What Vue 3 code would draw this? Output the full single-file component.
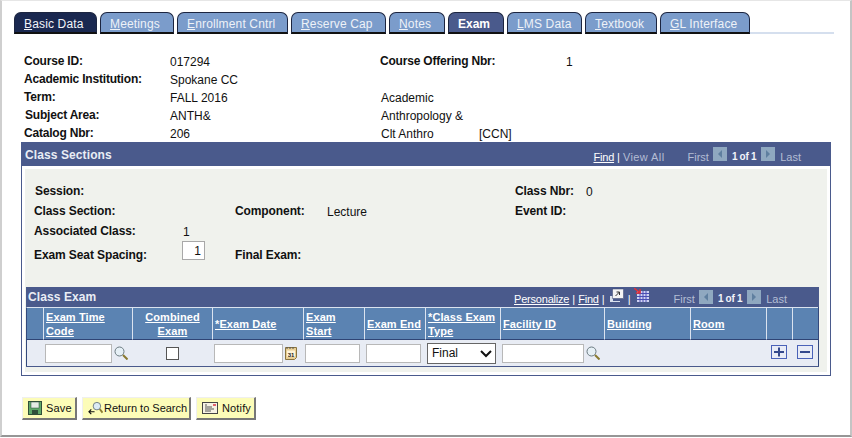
<template>
  <div class="page">
    <div class="tabs">
      <div
        v-for="tab in tabs"
        :key="tab.label"
        class="tab"
        :class="{ first: tab.first, current: tab.current }"
        :style="{ width: tab.width + 'px' }"
      >
        <u v-if="!tab.current">{{ tab.label[0] }}</u>{{ tab.current ? tab.label : tab.label.slice(1) }}
      </div>
      <div class="tab-rest"></div>
    </div>

    <div class="info">
      <b>Course ID:</b><span>017294</span><b class="span2">Course Offering Nbr:</b><span>1</span>
      <b>Academic Institution:</b><span class="span4">Spokane CC</span>
      <b>Term:</b><span>FALL 2016</span><span class="span3 indent">Academic</span>
      <b class="indent">Subject Area:</b><span>ANTH&amp;</span><span class="span3 indent">Anthropology &amp;</span>
      <b>Catalog Nbr:</b><span>206</span><span class="indent">Clt Anthro</span><span class="span2">[CCN]</span>
    </div>

    <section class="section">
      <header class="section-head">
        <span class="section-title">Class Sections</span>
        <nav class="pager">
          <u class="link">Find</u><i class="sep">|</i><span class="dim view-all">View All</span>
          <span class="dim first-label">First</span>
          <svg class="nav-btn" viewBox="0 0 14 14"><rect width="14" height="14" fill="#8fa8c0" /><path d="M9 3v8L5 7z" fill="#5f7f9f" /></svg>
          <b class="count">1 of 1</b>
          <svg class="nav-btn" viewBox="0 0 14 14"><rect width="14" height="14" fill="#8fa8c0" /><path d="M5 3v8l4-4z" fill="#5f7f9f" /></svg>
          <span class="dim">Last</span>
        </nav>
      </header>

      <div class="panel">
        <div class="fields">
          <b class="indent">Session:</b><span></span><span></span><span></span><b>Class Nbr:</b><span>0</span>
          <b>Class Section:</b><span></span><b>Component:</b><span>Lecture</span><b>Event ID:</b><span></span>
          <b>Associated Class:</b><span class="nudge">1</span><span></span><span></span><span></span><span></span>
          <b class="low">Exam Seat Spacing:</b><input class="seat" value="1" /><b class="low">Final Exam:</b>
        </div>

        <div class="grid">
          <header class="grid-head">
            <span class="section-title">Class Exam</span>
            <nav class="pager small">
              <u class="link">Personalize</u><i class="sep">|</i><u class="link">Find</u><i class="sep">|</i>
              <svg class="tool" viewBox="0 0 15 15">
                <path d="M1 8h3v5h7v1H1z" fill="#d8e0ec" />
                <rect x="3.500" y="1" width="11" height="9.500" fill="#f4f4f4" stroke="#39456e" stroke-width=".5" />
                <path d="M6.500 8l4-4M7.500 4h3v3" fill="none" stroke="#333" />
              </svg>
              <i class="sep">|</i>
              <svg class="tool" viewBox="0 0 15 15">
                <path d="M3 3h12v11H3z" fill="#cfd2f2" />
                <path d="M3 5.500h12M3 8.500h12M3 11.500h12M6 3v11M9 3v11M12 3v11" stroke="#4a4fb5" />
                <path d="M0 0l6 5M6 1v4H2" fill="none" stroke="#e0303a" stroke-width="1.500" />
              </svg>
              <span class="dim first-label">First</span>
              <svg class="nav-btn" viewBox="0 0 14 14"><rect width="14" height="14" fill="#8fa8c0" /><path d="M9 3v8L5 7z" fill="#5f7f9f" /></svg>
              <b class="count">1 of 1</b>
              <svg class="nav-btn" viewBox="0 0 14 14"><rect width="14" height="14" fill="#8fa8c0" /><path d="M5 3v8l4-4z" fill="#5f7f9f" /></svg>
              <span class="dim">Last</span>
            </nav>
          </header>

          <div class="table">
            <div class="th"></div>
            <div v-for="col in columns" :key="col.label" class="th" :class="{ centered: col.center }">
              <u>{{ col.label }}</u>
            </div>
            <div class="th"></div>
            <div class="th"></div>

            <div class="td"></div>
            <div class="td">
              <input class="text w67" />
              <svg class="lookup" viewBox="0 0 14 14">
                <circle cx="5.500" cy="5.500" r="4.500" fill="#e6f0f6" stroke="#6b7a80" />
                <path d="M9 9l4.500 4.500" stroke="#8a7a30" stroke-width="2" />
              </svg>
            </div>
            <div class="td center"><span class="check"></span></div>
            <div class="td">
              <input class="text w69" />
              <svg class="cal" viewBox="0 0 12 14">
                <path d="M.5 1.500h11v10l-2 2h-9z" fill="#e8cf94" stroke="#8a7440" />
                <path d="M2 1v2M5 1v2M8 1v2" stroke="#555" />
                <rect x="2" y="4.500" width="8" height="6.500" fill="#fff4d8" />
                <text x="6" y="10.500" text-anchor="middle" class="cal-day">31</text>
              </svg>
            </div>
            <div class="td"><input class="text w55" /></div>
            <div class="td"><input class="text w55" /></div>
            <div class="td">
              <div class="select-wrap">
                <select class="select"><option>Final</option></select>
                <svg class="chevron" viewBox="0 0 12 8"><path d="M1 1l5 5 5-5" fill="none" stroke="#111" stroke-width="2" /></svg>
              </div>
            </div>
            <div class="td">
              <input class="text w82" />
              <svg class="lookup" viewBox="0 0 14 14">
                <circle cx="5.500" cy="5.500" r="4.500" fill="#e6f0f6" stroke="#6b7a80" />
                <path d="M9 9l4.500 4.500" stroke="#8a7a30" stroke-width="2" />
              </svg>
            </div>
            <div class="td"></div>
            <div class="td"></div>
            <div class="td center">
              <svg class="row-btn" viewBox="0 0 16 14"><rect x=".5" y=".5" width="15" height="13" fill="#e8ecf6" stroke="#4a62b8" /><path d="M3 7h10M8 2.500v9" stroke="#34498c" stroke-width="2" /></svg>
            </div>
            <div class="td center">
              <svg class="row-btn" viewBox="0 0 16 14"><rect x=".5" y=".5" width="15" height="13" fill="#e8ecf6" stroke="#4a62b8" /><path d="M3 7h10" stroke="#34498c" stroke-width="2" /></svg>
            </div>
          </div>
        </div>
      </div>
    </section>

    <div class="buttons">
      <button class="btn save">
        <svg viewBox="0 0 14 14" width="14" height="14">
          <rect x=".5" y=".5" width="13" height="13" fill="#5ea868" stroke="#2f4f3a" />
          <rect x="3" y="1" width="8" height="6" fill="#e4ece4" stroke="#2f4f3a" stroke-width=".5" />
          <rect x="4" y="9" width="6" height="4" fill="#2f4f3a" />
        </svg>
        Save
      </button>
      <button class="btn search">
        <svg viewBox="0 0 16 14" width="15" height="14">
          <circle cx="9.500" cy="5" r="4" fill="#dcecf6" stroke="#6b7a80" />
          <path d="M12.500 8l3 4" stroke="#8a7a30" stroke-width="2" />
          <path d="M7 11H1M3.500 8.500L1 11l2.500 2.500" fill="none" stroke="#111" stroke-width="1.200" />
        </svg>
        Return to Search
      </button>
      <button class="btn notify">
        <svg viewBox="0 0 16 14" width="16" height="14">
          <rect x=".5" y="1.500" width="15" height="11" fill="#f6f2e4" stroke="#444" />
          <path d="M3 4h2M3 6h7M3 8h9M3 10h6" stroke="#555" />
          <rect x="11" y="3" width="3" height="2" fill="#e0606a" />
        </svg>
        Notify
      </button>
    </div>
  </div>
</template>

<script setup>
const tabs = [
  { label: 'Basic Data', width: 83, first: true },
  { label: 'Meetings', width: 74 },
  { label: 'Enrollment Cntrl', width: 111 },
  { label: 'Reserve Cap', width: 95 },
  { label: 'Notes', width: 56 },
  { label: 'Exam', width: 56, current: true },
  { label: 'LMS Data', width: 75 },
  { label: 'Textbook', width: 72 },
  { label: 'GL Interface', width: 90 }
]

const columns = [
  { label: 'Exam Time Code' },
  { label: 'Combined Exam', center: true },
  { label: '*Exam Date' },
  { label: 'Exam Start' },
  { label: 'Exam End' },
  { label: '*Class Exam Type' },
  { label: 'Facility ID' },
  { label: 'Building' },
  { label: 'Room' }
]
</script>

<style>
html,
body {
  margin: 0;
  background: #fff;
}
</style>

<style scoped>
.page {
  box-sizing: border-box;
  width: 852px;
  height: 437px;
  padding: 12px 0 0 12px;
  border-top: 1px solid #e6e6e6;
  border-left: 2px solid #cfcfcf;
  border-right: 2px solid #c4c4c4;
  border-bottom: 2px solid #969696;
  font-family: "Liberation Sans", Arial, sans-serif;
  font-size: 12px;
  color: #111;
  overflow: hidden;
}

.tabs {
  display: flex;
  gap: 3px;
  width: 820px;
  height: 22px;
  margin-top: -1px;
}

.tab {
  box-sizing: border-box;
  height: 22px;
  line-height: 22px;
  padding-left: 9px;
  background: #7b9ccb;
  border: 1px solid #1c2540;
  border-bottom: 2px solid #111;
  border-radius: 7px 7px 0 0;
  color: #eef2f8;
  letter-spacing: 0.15px;
  white-space: nowrap;
}

.tab.first {
  background: #1a2850;
  color: #f2f4fa;
}

.tab.current {
  background: #4a5a8c;
  color: #fff;
  font-weight: bold;
  letter-spacing: 0;
}

.tab-rest {
  flex: 1;
  margin-top: 20px;
  margin-left: -3px;
  height: 2px;
  background: #d5dfee;
}

.info {
  display: grid;
  grid-template-columns: 146px 210px 99px 87px auto;
  grid-auto-rows: 18px;
  margin: 18px 0 0 10px;
  line-height: 18px;
}

.info b {
  letter-spacing: -0.2px;
  white-space: nowrap;
}

.info span {
  padding-top: 1px;
}

.span2 {
  grid-column: span 2;
}

.span3 {
  grid-column: span 3;
}

.span4 {
  grid-column: span 4;
}

.indent {
  padding-left: 1px;
}

.section {
  box-sizing: border-box;
  width: 810px;
  height: 234px;
  margin-left: 7px;
  border: solid #4a5a8c;
  border-width: 0 1px 1px;
}

.section-head {
  display: flex;
  align-items: center;
  height: 24px;
  margin: 0 -1px;
  padding-left: 4px;
  background: #4a5a8c;
}

.section-title {
  padding-top: 1px;
  color: #e9edf5;
  font-weight: bold;
  letter-spacing: 0.1px;
}

.grid-head .section-title {
  padding-top: 0;
}

.pager {
  display: flex;
  align-items: center;
  margin-left: auto;
  padding: 5px 30px 0 0;
  font-size: 11px;
  color: #fff;
}

.pager.small {
  padding: 3px 32px 0 0;
}

.link {
  color: #fff;
  letter-spacing: -0.2px;
}

.sep {
  margin: 0 3px;
  font-style: normal;
  color: #fff;
}

.dim {
  color: #b4bdd4;
}

.view-all {
  letter-spacing: 0.4px;
}

.first-label {
  margin: 0 4px 0 23px;
}

.nav-btn {
  width: 14px;
  height: 14px;
  margin-top: -6px;
}

.small .nav-btn {
  margin-top: -4px;
}

.count {
  margin: 0 5px;
  font-size: 10px;
  letter-spacing: -0.3px;
  color: #f2f4fa;
}

.nav-btn + .count + .nav-btn {
  margin-right: 5px;
}

.tool {
  width: 15px;
  height: 15px;
  margin: -7px 1px 0 1px;
}

.panel {
  height: 203px;
  margin: 3px 3px 0;
  background: #f0f2ed;
}

.fields {
  display: grid;
  grid-template-columns: 148px 53px 92px 188px 71px auto;
  grid-template-rows: 20px 20px 20px 28px;
  padding: 12px 0 0 9px;
  line-height: 20px;
}

.fields b {
  letter-spacing: -0.1px;
}

.nudge {
  padding-left: 1px;
}

.fields span {
  padding-top: 1px;
}

.low {
  padding-top: 4px;
}

.seat {
  box-sizing: border-box;
  width: 23px;
  height: 19px;
  padding: 0 3px 0 0;
  border: 1px solid #a8a8a8;
  background: #fff;
  font: 12px "Liberation Sans", Arial, sans-serif;
  text-align: right;
  color: #111;
}

.grid {
  width: 793px;
  margin: 18px 0 0 1px;
}

.grid-head {
  display: flex;
  align-items: center;
  height: 20px;
  padding-left: 2px;
  background: #4a5a8c;
}

.table {
  display: grid;
  grid-template-columns: 17px 89px 80px 91px 61px 61px 75px 104px 86px 76px 26px 26px;
  grid-template-rows: 33px 26px;
  background: #e8ecf4;
  border-bottom: 1px solid #4a5a8c;
  box-shadow: inset 1px 0 #34497d, inset -1px 0 #34497d;
}

.th {
  box-sizing: border-box;
  display: flex;
  align-items: center;
  padding: 0 0 0 2px;
  background: #5b83b2;
  border-left: 1px solid #dbe3ef;
  border-top: 1px solid #dbe3ef;
  border-bottom: 1px solid #2f4475;
  color: #fff;
  font-size: 11px;
  font-weight: bold;
  line-height: 14px;
  letter-spacing: 0.1px;
}

.th:first-child {
  border-left: 1px solid #34497d;
}

.th.centered {
  justify-content: center;
  text-align: center;
  padding: 0 3px;
}

.td {
  display: flex;
  align-items: center;
  gap: 2px;
  padding-left: 2px;
}

.td.center {
  justify-content: center;
  padding-left: 0;
}

.text {
  box-sizing: border-box;
  height: 19px;
  padding: 0;
  border: 1px solid #b8b8b8;
  background: #fff;
}

.w67 { width: 67px; }
.w69 { width: 69px; }
.w55 { width: 55px; }
.w82 { width: 82px; }

.lookup {
  width: 14px;
  height: 14px;
  flex: none;
}

.cal {
  width: 12px;
  height: 14px;
  flex: none;
}

.cal-day {
  font: bold 6px "Liberation Sans", Arial, sans-serif;
  fill: #222;
}

.check {
  box-sizing: border-box;
  width: 13px;
  height: 13px;
  border: 1px solid #555;
  background: #fff;
}

.select-wrap {
  position: relative;
  width: 69px;
  height: 21px;
}

.select {
  appearance: none;
  box-sizing: border-box;
  width: 100%;
  height: 100%;
  padding: 0 0 0 4px;
  border: 1px solid #666;
  border-radius: 0;
  background: #fff;
  font: 12px "Liberation Sans", Arial, sans-serif;
  color: #111;
}

.chevron {
  position: absolute;
  top: 7px;
  right: 4px;
  width: 12px;
  height: 8px;
}

.row-btn {
  width: 16px;
  height: 14px;
  margin-top: -3px;
}

.buttons {
  display: flex;
  gap: 5px;
  margin: 21px 0 0 8px;
}

.btn {
  box-sizing: border-box;
  display: flex;
  align-items: center;
  gap: 4px;
  height: 23px;
  padding: 0 0 0 5px;
  background: #fcfcb8;
  border: 1px solid #efefef;
  border-right: 2px solid #777;
  border-bottom: 2px solid #777;
  font: 11px "Liberation Sans", Arial, sans-serif;
  letter-spacing: 0.15px;
  color: #111;
  white-space: nowrap;
}

.btn svg {
  flex: none;
}

.btn.save { width: 55px; }
.btn.search { width: 109px; gap: 1px; letter-spacing: 0; }
.btn.notify { width: 60px; }
</style>
